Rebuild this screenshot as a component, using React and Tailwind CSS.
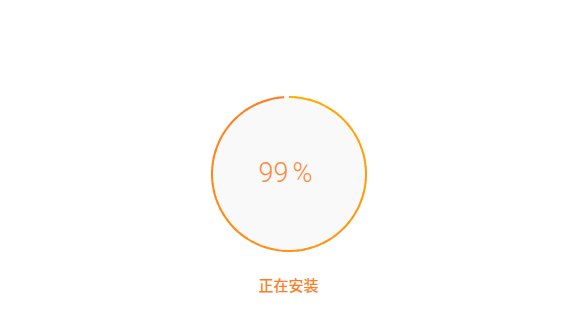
// Install progress screen: gradient ring with percent + status label.

const SIZE = 156;
const R = 77;
const PROGRESS = 0.99;

function mix(a, b, t) {
  const pa = [parseInt(a.slice(1, 3), 16), parseInt(a.slice(3, 5), 16), parseInt(a.slice(5, 7), 16)];
  const pb = [parseInt(b.slice(1, 3), 16), parseInt(b.slice(3, 5), 16), parseInt(b.slice(5, 7), 16)];
  const c = pa.map((v, i) => Math.round(v + (pb[i] - v) * t));
  return `rgb(${c[0]},${c[1]},${c[2]})`;
}

function point(angle) {
  const rad = (angle - 90) * (Math.PI / 180);
  return [SIZE / 2 + R * Math.cos(rad), SIZE / 2 + R * Math.sin(rad)];
}

function Ring() {
  const total = 360 * PROGRESS;
  const steps = 72;
  const segs = [];
  for (let i = 0; i < steps; i++) {
    const a0 = (total * i) / steps;
    const a1 = Math.min(total, (total * (i + 1)) / steps + (i < steps - 1 ? 0.6 : 0));
    const [x0, y0] = point(a0);
    const [x1, y1] = point(a1);
    segs.push(
      <path
        key={i}
        d={`M ${x0} ${y0} A ${R} ${R} 0 0 1 ${x1} ${y1}`}
        fill="none"
        stroke={mix("#ffae00", "#ff7c20", Math.pow(i / (steps - 1), 0.8))}
        strokeWidth="2"
      />
    );
  }
  return (
    <svg width={SIZE} height={SIZE} viewBox={`0 0 ${SIZE} ${SIZE}`} className="absolute inset-0">
      {segs}
    </svg>
  );
}

export default function App() {
  return (
    <div className="w-[580px] h-[332px] bg-white flex flex-col items-center pt-[96px] pr-[3px]">
      <div className="relative w-[156px] h-[156px] rounded-full bg-[#f9f9f9] flex items-center justify-center">
        <Ring />
        <span
          className="relative text-[27px] font-light text-[#ff8838] pb-[2px] pr-[6px]"
          style={{ fontFamily: "Roboto, 'Open Sans', sans-serif" }}
        >
          99<span className="ml-[4px]">%</span>
        </span>
      </div>
      <p
        className="mt-[22px] text-[15px] leading-[22px] font-medium text-[#ff7d26]"
        style={{ fontFamily: "'Noto Sans CJK SC', sans-serif" }}
      >
        正在安装
      </p>
    </div>
  );
}
